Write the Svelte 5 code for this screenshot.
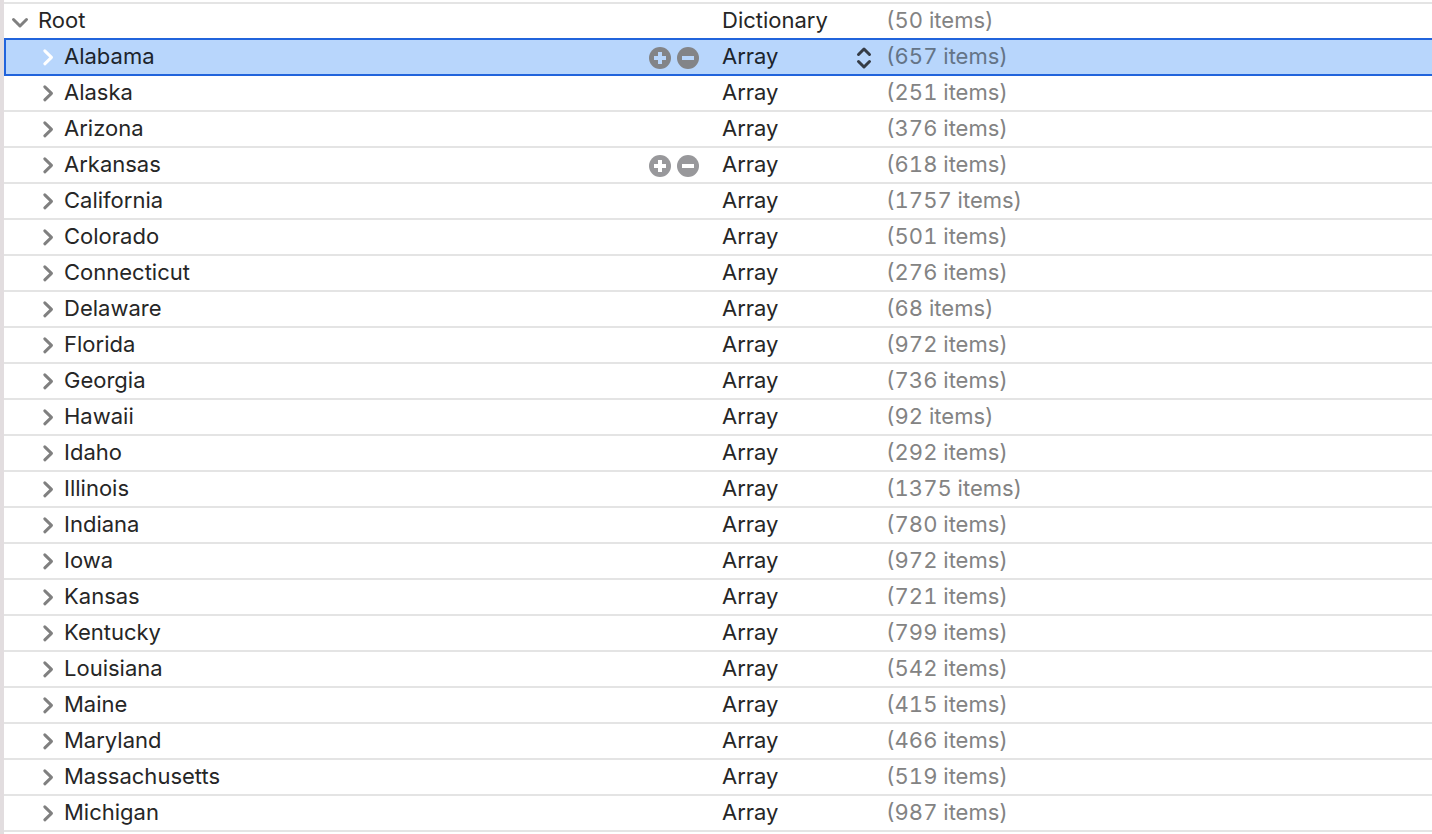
<script>
  const states = [
    ['Alabama', 657], ['Alaska', 251], ['Arizona', 376], ['Arkansas', 618],
    ['California', 1757], ['Colorado', 501], ['Connecticut', 276], ['Delaware', 68],
    ['Florida', 972], ['Georgia', 736], ['Hawaii', 92], ['Idaho', 292],
    ['Illinois', 1375], ['Indiana', 780], ['Iowa', 972], ['Kansas', 721],
    ['Kentucky', 799], ['Louisiana', 542], ['Maine', 415], ['Maryland', 466],
    ['Massachusetts', 519], ['Michigan', 987]
  ];
  const rows = [
    { name: 'Root', type: 'Dictionary', count: 50, root: true },
    ...states.map(([name, count]) => ({ name, type: 'Array', count, root: false }))
  ];
  let selected = $state('Alabama');
  let hovered = $state('Arkansas');
</script>

<main class="editor">
  <table>
    <colgroup>
      <col class="key-col" />
      <col class="type-col" />
      <col />
    </colgroup>
    <tbody>
      {#each rows as row (row.name)}
        <tr
          class:selected={row.name === selected}
          onclick={() => (selected = row.name)}
          onmouseenter={() => (hovered = row.name)}
        >
          <td>
            <div class="key" class:child={!row.root}>
              <button class="disclosure" aria-label="Toggle {row.name}" aria-expanded={row.root}>
                <svg viewBox="0 0 20 20" width="20" height="20" aria-hidden="true">
                  <path d={row.root ? 'M3.5 8.5 10 15 16.5 8.5' : 'M7.8 3.8 14.500 10.300 7.8 16.8'} />
                </svg>
              </button>
              <span class="name">{row.name}</span>
              {#if row.name === selected || row.name === hovered}
                <span class="actions">
                  <button aria-label="Add item to {row.name}">
                    <svg viewBox="0 0 22 22" width="22" height="22" aria-hidden="true">
                      <circle cx="11" cy="11" r="11" />
                      <path d="M5 11H17M11 5V17" />
                    </svg>
                  </button>
                  <button aria-label="Remove {row.name}">
                    <svg viewBox="0 0 22 22" width="22" height="22" aria-hidden="true">
                      <circle cx="11" cy="11" r="11" />
                      <path d="M5 11H17" />
                    </svg>
                  </button>
                </span>
              {/if}
            </div>
          </td>
          <td>
            {#if row.name === selected}
              <div class="type">
                <select aria-label="Type of {row.name}" value={row.type}>
                  <option>Array</option>
                  <option>Dictionary</option>
                </select>
                <svg class="stepper" viewBox="0 0 16 24" width="16" height="24" aria-hidden="true">
                  <path d="M2.5 8.5 8 3 13.5 8.5M2.5 15.5 8 21 13.5 15.5" />
                </svg>
              </div>
            {:else}
              {row.type}
            {/if}
          </td>
          <td class="value">({row.count} items)</td>
        </tr>
      {/each}
    </tbody>
  </table>
</main>

<style>
  :global(body) {
    margin: 0;
    background: #fff;
  }
  .editor {
    box-sizing: border-box;
    min-height: 100vh;
    padding-top: 2px;
    border-left: 4px solid #e2dddf;
    color: #262626;
    font: 22px/32px Inter, "Liberation Sans", sans-serif;
  }
  table {
    width: 100%;
    table-layout: fixed;
    border-spacing: 0;
    border-top: 2px solid #e4e4e4;
  }
  .key-col {
    width: 50%;
  }
  .type-col {
    width: 164px;
  }
  td {
    padding: 0 0 2px 4px;
    border-bottom: 2px solid #e4e4e4;
    vertical-align: top;
    white-space: nowrap;
  }
  td:first-child {
    padding-left: 6px;
  }
  .value {
    color: #838383;
    font-variant-numeric: tabular-nums;
  }
  .selected {
    position: relative;
    background: #b8d6fc;
    color: #1c242c;
  }
  .selected td:first-child::after {
    content: "";
    position: absolute;
    inset: -2px 0 0 0;
    border: 2px solid #2164dc;
    border-right: 0;
    pointer-events: none;
  }
  .selected .value {
    color: #647487;
  }
  .key {
    display: flex;
    align-items: center;
    padding-right: 19px;
  }
  .child {
    padding-left: 27px;
  }
  button {
    display: flex;
    padding: 0;
    border: 0;
    background: none;
  }
  svg {
    display: block;
    fill: none;
  }
  .disclosure {
    padding-top: 2px;
    margin-right: 8px;
    stroke: #808080;
    stroke-width: 3;
    stroke-linecap: round;
    stroke-linejoin: round;
  }
  .child .disclosure {
    margin-right: 7px;
  }
  .selected .disclosure {
    stroke: #fff;
  }
  .actions {
    display: flex;
    gap: 6px;
    margin-left: auto;
    padding-top: 4px;
  }
  .actions circle {
    fill: #98989b;
  }
  .actions path {
    stroke: #fff;
    stroke-width: 4;
  }
  .selected .actions circle {
    fill: #838487;
  }
  .selected .actions path {
    stroke: #b8d6fc;
  }
  .type {
    display: grid;
    align-items: center;
    padding-right: 10px;
  }
  .type > * {
    grid-area: 1 / 1;
  }
  select {
    appearance: none;
    width: 100%;
    height: 32px;
    padding: 0;
    border: 0;
    background: none;
    color: inherit;
    font: inherit;
  }
  .stepper {
    justify-self: end;
    margin-top: 4px;
    stroke: #353c46;
    stroke-width: 3;
    stroke-linecap: round;
    stroke-linejoin: round;
    pointer-events: none;
  }
</style>
